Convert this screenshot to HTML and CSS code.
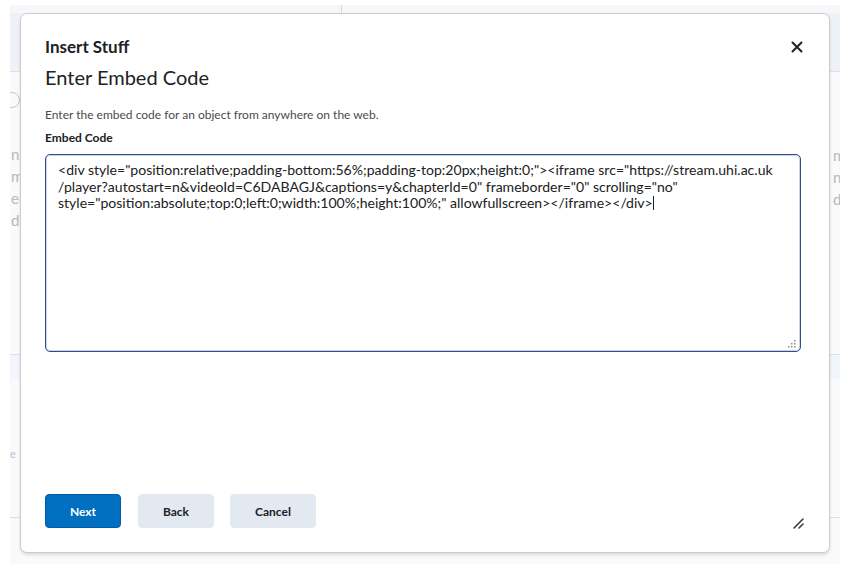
FILE: index.html
```html
<!DOCTYPE html>
<html lang="en">
<head>
  <meta charset="UTF-8">
  <title>Insert Stuff</title>
  <link rel="stylesheet" href="styles.css">
</head>
<body>
  <div class="page">
    <div class="page-top">
      <div class="page-top-cell"></div>
      <div class="page-top-cell"></div>
    </div>
    <div class="page-band"></div>
    <div class="page-body">
      <div class="page-col">
        <div class="page-search-wrap"><span class="page-search"></span></div>
        <p class="page-text">n<br>m<br>eli<br>d</p>
      </div>
      <div class="page-col page-col-right">
        <p class="page-text">m<br>n<br>de</p>
      </div>
    </div>
    <div class="page-strip"></div>
    <div class="page-lower">
      <p class="page-text">e</p>
    </div>
    <div class="page-foot"></div>
  </div>

  <div class="dialog">
    <div class="dialog-header">
      <h1 class="dialog-title">Insert Stuff</h1>
      <button class="dialog-close" aria-label="Close">
        <svg width="12" height="12" viewBox="0 0 12 12">
          <path d="M1.5 1.5 L10.5 10.5 M10.5 1.5 L1.5 10.5" stroke="#202122" stroke-width="2" stroke-linecap="round"/>
        </svg>
      </button>
    </div>
    <h2 class="dialog-subtitle">Enter Embed Code</h2>

    <p class="dialog-desc">Enter the embed code for an object from anywhere on the web.</p>
    <label class="field-label">Embed Code</label>
    <div class="code-box">
      <div class="code-text">&lt;div style="position:relative;padding-bottom:56%;padding-top:20px;height:0;"&gt;&lt;iframe src="https://stream.uhi.ac.uk
/player?autostart=n&amp;videoId=C6DABAGJ&amp;captions=y&amp;chapterId=0" frameborder="0" scrolling="no"
style="position:absolute;top:0;left:0;width:100%;height:100%;" allowfullscreen&gt;&lt;/iframe&gt;&lt;/div&gt;<span class="caret"></span></div>
      <svg class="code-grip" width="8" height="8" viewBox="0 0 8 8">
        <rect x="6" y="0" width="1.5" height="1.5" fill="#8a8d90"/>
        <rect x="3" y="3" width="1.5" height="1.5" fill="#8a8d90"/>
        <rect x="6" y="3" width="1.5" height="1.5" fill="#8a8d90"/>
        <rect x="0" y="6" width="1.5" height="1.5" fill="#8a8d90"/>
        <rect x="3" y="6" width="1.5" height="1.5" fill="#8a8d90"/>
        <rect x="6" y="6" width="1.5" height="1.5" fill="#8a8d90"/>
      </svg>
    </div>

    <div class="dialog-footer">
      <button class="btn btn-primary">Next</button>
      <button class="btn btn-back">Back</button>
      <button class="btn btn-wide">Cancel</button>
    </div>
    <svg class="dialog-resize" width="12" height="12" viewBox="0 0 12 12">
      <path d="M1 11 L10 2 M6 11 L10 7" stroke="#3a3d40" stroke-width="1.6" stroke-linecap="round"/>
    </svg>
  </div>
</body>
</html>
```

FILE: styles.css
```css
body {
  margin: 0;
  background: #fff;
  font-family: Lato, "Open Sans", sans-serif;
  color: #202122;
}

/* faded page behind the dialog */
.page {
  margin: 5px 17px 0 10px;
  height: 559px;
  background: #f9fafb;
}
.page-top {
  display: flex;
  height: 8px;
  background: #f6f7f9;
}
.page-top-cell:first-child {
  width: 331px;
  border-right: 1px solid #d3d6da;
}
.page-band {
  height: 58px;
  background: #eef1f5;
  border-bottom: 1px solid #dde1e6;
}
.page-body {
  height: 282px;
  display: flex;
  justify-content: space-between;
}
.page-col {
  width: 12px;
  padding-top: 20px;
}
.page-col-right {
  width: 8px;
  padding-top: 72px;
  overflow: hidden;
}
.page-search-wrap {
  width: 12px;
  height: 18px;
  overflow: hidden;
}
.page-search {
  display: block;
  width: 14px;
  height: 14px;
  margin-left: -6px;
  border: 1.5px solid #c4c8cd;
  border-radius: 50%;
}
.page-text {
  margin: 33px 0 0 1px;
  font-size: 15px;
  line-height: 22px;
  color: #b5b9be;
}
.page-col-right .page-text {
  margin-top: 0;
}
.page-strip {
  height: 24px;
  background: #f2f5f9;
  border-top: 1px solid #dde1e6;
}
.page-lower {
  height: 138px;
  padding-top: 68px;
  box-sizing: border-box;
}
.page-lower .page-text {
  margin: 0;
  font-size: 11px;
  line-height: 14px;
  color: #b9c2ce;
}
.page-foot {
  height: 44px;
  border-top: 1px solid #dde1e6;
}

/* dialog */
.dialog {
  position: absolute;
  left: 20px;
  top: 13px;
  width: 810px;
  height: 540px;
  background: #fff;
  border: 1px solid #c9cdd1;
  border-radius: 7px;
  box-shadow: 0 2px 3px rgba(0,0,0,0.12);
  padding: 0 28px 0 24px;
  box-sizing: border-box;
  display: flex;
  flex-direction: column;
}
.dialog-header {
  display: flex;
  justify-content: space-between;
  align-items: center;
  padding-top: 23px;
}
.dialog-title {
  margin: 0;
  font-size: 17px;
  font-weight: 700;
  line-height: 20px;
}
.dialog-close {
  border: none;
  background: none;
  padding: 0;
  margin-right: -2px;
  width: 12px;
  height: 12px;
  display: flex;
}
.dialog-subtitle {
  margin: 8px 0 0;
  font-size: 20px;
  font-weight: 400;
  line-height: 24px;
}
.dialog-desc {
  margin: 19px 0 0;
  font-size: 12px;
  line-height: 14px;
  color: #494c4e;
}
.field-label {
  display: block;
  margin-top: 9px;
  font-size: 12px;
  font-weight: 700;
  line-height: 14px;
}
.code-box {
  position: relative;
  margin: 9px 0 0;
  height: 198px;
  border: 1px solid #2e4f8f;
  border-radius: 5px;
  box-shadow: inset 0 0 0 1px rgba(46,79,143,0.25);
  box-sizing: border-box;
  padding: 7px 12px;
  width: 756px;
}
.code-text {
  white-space: pre;
  font-size: 14.05px;
  line-height: 16.5px;
  color: #202122;
}
.caret {
  display: inline-block;
  width: 1px;
  height: 14px;
  background: #202122;
  vertical-align: -2px;
}
.code-grip {
  position: absolute;
  right: 4px;
  bottom: 3px;
}
.dialog-footer {
  margin-top: auto;
  margin-bottom: 24px;
  display: flex;
  gap: 16px;
}
.btn {
  height: 34px;
  width: 76px;
  border: 1px solid #e3e9f1;
  border-radius: 4px;
  background: #e3e9f1;
  font-family: inherit;
  font-size: 12px;
  font-weight: 700;
  color: #202122;
}
.btn-primary {
  background: #006fbf;
  border-color: #005ea6;
  color: #fff;
}
.btn-back {
  margin-left: 1px;
}
.btn-wide {
  width: 86px;
}
.dialog-resize {
  position: absolute;
  right: 24px;
  bottom: 23px;
}
```
